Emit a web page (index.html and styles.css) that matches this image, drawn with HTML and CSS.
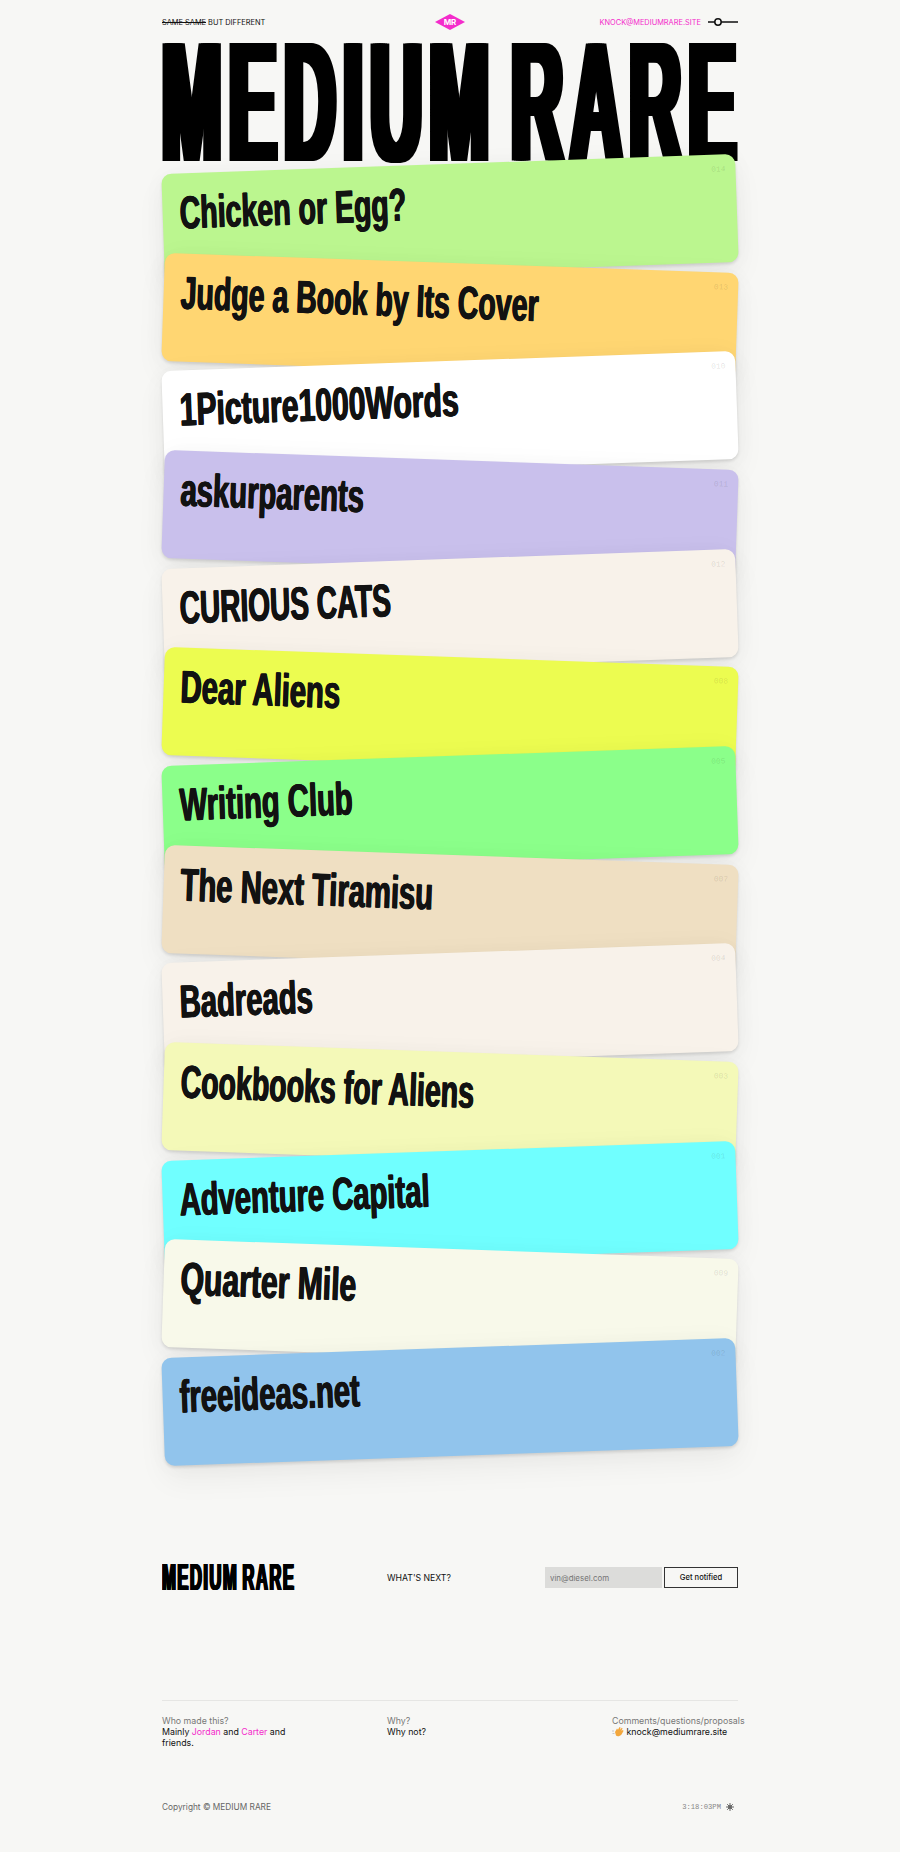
FILE: index.html
```html
<!DOCTYPE html>
<html lang="en">
<head>
  <meta charset="UTF-8" />
  <title>Medium Rare</title>
  <meta name="viewport" content="width=device-width, initial-scale=1.0">
  <link rel="stylesheet" href="styles.css">
</head>
<body>
  <div class="page">
    <!-- Top bar -->
    <div class="topbar">
      <div class="topbar-left"><s>SAME SAME</s> BUT DIFFERENT</div>
      <div class="logo-mark">MR</div>
      <div class="topbar-right">
        <a class="pink" href="#">KNOCK@MEDIUMRARE.SITE</a>
        <svg class="toggle" width="30" height="10" viewBox="0 0 30 10"><path d="M0 5H7M13 5H30" stroke="#111" stroke-width="1.5"/><circle cx="10" cy="5" r="3.2" fill="none" stroke="#111" stroke-width="1.5"/></svg>
      </div>
    </div>

    <h1 class="title"><span>MEDIUM RARE</span></h1>

    <!-- Cards -->
    <div class="cards">
      <a class="card tilt-up green" href="#"><span class="name tight">Chicken or Egg?</span><span class="num">014</span></a>
      <a class="card tilt-down orange" href="#"><span class="name tight">Judge a Book by Its Cover</span><span class="num">013</span></a>
      <a class="card tilt-up white" href="#"><span class="name loose">1Picture1000Words</span><span class="num">010</span></a>
      <a class="card tilt-down purple" href="#"><span class="name">askurparents</span><span class="num">011</span></a>
      <a class="card tilt-up cream" href="#"><span class="name tightest">CURIOUS CATS</span><span class="num">012</span></a>
      <a class="card tilt-down yellow" href="#"><span class="name">Dear Aliens</span><span class="num">008</span></a>
      <a class="card tilt-up mint" href="#"><span class="name">Writing Club</span><span class="num">005</span></a>
      <a class="card tilt-down tan" href="#"><span class="name">The Next Tiramisu</span><span class="num">007</span></a>
      <a class="card tilt-up cream" href="#"><span class="name">Badreads</span><span class="num">004</span></a>
      <a class="card tilt-down lemon" href="#"><span class="name tight">Cookbooks for Aliens</span><span class="num">003</span></a>
      <a class="card tilt-up cyan" href="#"><span class="name">Adventure Capital</span><span class="num">001</span></a>
      <a class="card tilt-down ivory" href="#"><span class="name loose">Quarter Mile</span><span class="num">009</span></a>
      <a class="card tilt-up blue" href="#"><span class="name">freeideas.net</span><span class="num">002</span></a>
    </div>

    <!-- Notify row -->
    <div class="notify">
      <div class="brand"><span>MEDIUM RARE</span></div>
      <div class="next">WHAT'S NEXT?</div>
      <form class="signup">
        <input class="email" type="text" placeholder="vin@diesel.com">
        <button class="notify-btn" type="button">Get notified</button>
      </form>
    </div>

    <!-- Footer -->
    <div class="info">
      <div class="info-col">
        <div class="muted">Who made this?</div>
        <div>Mainly <a class="pink" href="#">Jordan</a> and <a class="pink" href="#">Carter</a> and friends.</div>
      </div>
      <div class="info-col">
        <div class="muted">Why?</div>
        <div>Why not?</div>
      </div>
      <div class="info-col last">
        <div class="muted">Comments/questions/proposals</div>
        <div class="knock">
          <svg width="12" height="11" viewBox="0 0 12 11"><path d="M0 5H2M.5 7.500H2.500" stroke="#bbb" stroke-width=".8"/><path d="M3 6 5 2.500 6 3.800 7.500 1 8.500 1.500 8 3.800 9.800 1.800 10.600 2.500 9.300 4.800 11 4 11.500 5 9.500 8.500C8 10.500 5 10.800 4 9.500Z" fill="#f3a73c"/></svg>
          knock@mediumrare.site
        </div>
      </div>
    </div>

    <div class="bottom">
      <div class="copyright">Copyright © MEDIUM RARE</div>
      <div class="clock">3:18:03PM
        <svg class="sun" width="8" height="8" viewBox="0 0 8 8"><path d="M4 0V8M0 4H8M1.200 1.200 6.800 6.800M6.800 1.200 1.200 6.800" stroke="#666" stroke-width="1"/><circle cx="4" cy="4" r="2" fill="#666"/></svg>
      </div>
    </div>
  </div>
</body>
</html>
```
FILE: styles.css
```css
body {
  margin: 0;
  background: #f7f7f5;
  color: #111;
  font-family: Inter, "Liberation Sans", sans-serif;
  font-size: 10px;
}

a {
  color: inherit;
  text-decoration: none;
}

.page {
  width: 576px;
  margin: 0 auto;
}

.pink {
  color: #f42ccb;
}

/* Top bar */
.topbar {
  display: grid;
  grid-template-columns: 1fr auto 1fr;
  align-items: center;
  padding-top: 14px;
  height: 14px;
  font-size: 7.400px;
}

.logo-mark {
  width: 30px;
  height: 16px;
  background: #f42ccb;
  clip-path: polygon(50% 0, 100% 50%, 50% 100%, 0 50%);
  color: #fff;
  font-size: 8px;
  font-weight: 700;
  line-height: 16px;
  text-align: center;
}

.topbar-right {
  display: flex;
  justify-content: flex-end;
  align-items: center;
  gap: 7px;
}

/* Big heading */
.title {
  margin: 15px 0 0;
  height: 120px;
  font-family: "Liberation Sans", sans-serif;
  font-size: 85px;
  font-weight: 700;
  line-height: 60px;
  color: #000;
  white-space: nowrap;
}

/* no condensed font here: stretch the letters tall, then fatten the stems sideways */
.title span {
  display: inline-block;
  letter-spacing: 9px;
  word-spacing: -15px;
  transform: translateY(-1px) scale(.839, 2.020);
  transform-origin: left top;
  text-shadow: 2.500px 0 #000, -2.500px 0 #000, 5px 0 #000, -5px 0 #000;
}

/* Cards */
.cards {
  margin: 1px 1px 0;
}

.card {
  position: relative;
  display: block;
  box-sizing: border-box;
  height: 108px;
  margin-bottom: -9.350px;
  padding: 10px 17px;
  border-radius: 10px;
  box-shadow: 0 2px 3px rgba(0, 0, 0, .12), 0 14px 30px rgba(0, 0, 0, .05), 0 0 24px rgba(0, 0, 0, .03);
}

.tilt-up { transform: rotate(-2deg); }
.tilt-down { transform: rotate(2deg); }

.name {
  display: inline-block;
  font-family: "Liberation Sans", sans-serif;
  font-size: 46px;
  font-weight: 700;
  line-height: 58px;
  color: #121212;
  white-space: nowrap;
  transform: scaleX(.635);
  transform-origin: left center;
  -webkit-text-stroke: .6px #121212;
  text-shadow: .8px 0 #121212, -.8px 0 #121212;
}

.name.tight { transform: scaleX(.62); }
.name.tightest { transform: scaleX(.61); }
.name.loose { transform: scaleX(.655); }

.num {
  position: absolute;
  top: 10px;
  right: 10px;
  font-family: "Liberation Mono", monospace;
  font-size: 8px;
  color: rgba(0, 0, 0, .12);
}

.green { background: #bbf68f; }
.orange { background: #ffd672; }
.white { background: #fff; }
.purple { background: #c9c0ec; }
.cream { background: #f8f2ea; }
.yellow { background: #ecfc50; }
.mint { background: #8bff8a; }
.tan { background: #efdfc2; }
.lemon { background: #f4f9b8; }
.cyan { background: #70ffff; }
.ivory { background: #f8f9ea; }
.blue { background: #91c4ec; }

/* Notify row */
.notify {
  display: grid;
  grid-template-columns: 225px 1fr auto;
  align-items: center;
  margin-top: 116px;
  height: 30px;
}

.brand {
  font-family: "Liberation Sans", sans-serif;
  font-size: 37px;
  font-weight: 700;
  line-height: 30px;
  color: #000;
  white-space: nowrap;
}

.brand span {
  display: inline-block;
  letter-spacing: 3.200px;
  word-spacing: -4px;
  transform: scaleX(.45);
  transform-origin: left center;
  text-shadow: 1px 0 #000, -1px 0 #000, 2px 0 #000, -2px 0 #000;
}

.next {
  font-size: 8.700px;
}

.signup {
  display: flex;
  gap: 2px;
}

.email {
  box-sizing: border-box;
  width: 117px;
  height: 21px;
  padding: 0 5px;
  border: none;
  outline: none;
  background: #dcdcda;
  font-family: inherit;
  font-size: 7.900px;
}

.notify-btn {
  box-sizing: border-box;
  width: 74px;
  height: 21px;
  padding: 0;
  border: 1px solid #333;
  background: #f7f7f5;
  color: #111;
  font-family: inherit;
  font-size: 7.600px;
  font-weight: 500;
}

/* Footer */
.info {
  display: grid;
  grid-template-columns: 225px 225px 126px;
  margin-top: 107px;
  padding-top: 14px;
  border-top: 1px solid #e6e6e4;
  font-size: 8.800px;
  line-height: 11px;
}

.info-col {
  max-width: 130px;
}

.info-col.last {
  max-width: none;
  white-space: nowrap;
}

.muted {
  color: #777;
}

.knock svg {
  vertical-align: -2px;
}

.bottom {
  display: flex;
  justify-content: space-between;
  align-items: center;
  margin-top: 54px;
  font-size: 8.300px;
  color: #666;
}

.clock {
  display: flex;
  align-items: center;
  gap: 5px;
  font-family: "Liberation Mono", monospace;
  font-size: 7.200px;
  color: #888;
  padding-right: 4px;
}
```
